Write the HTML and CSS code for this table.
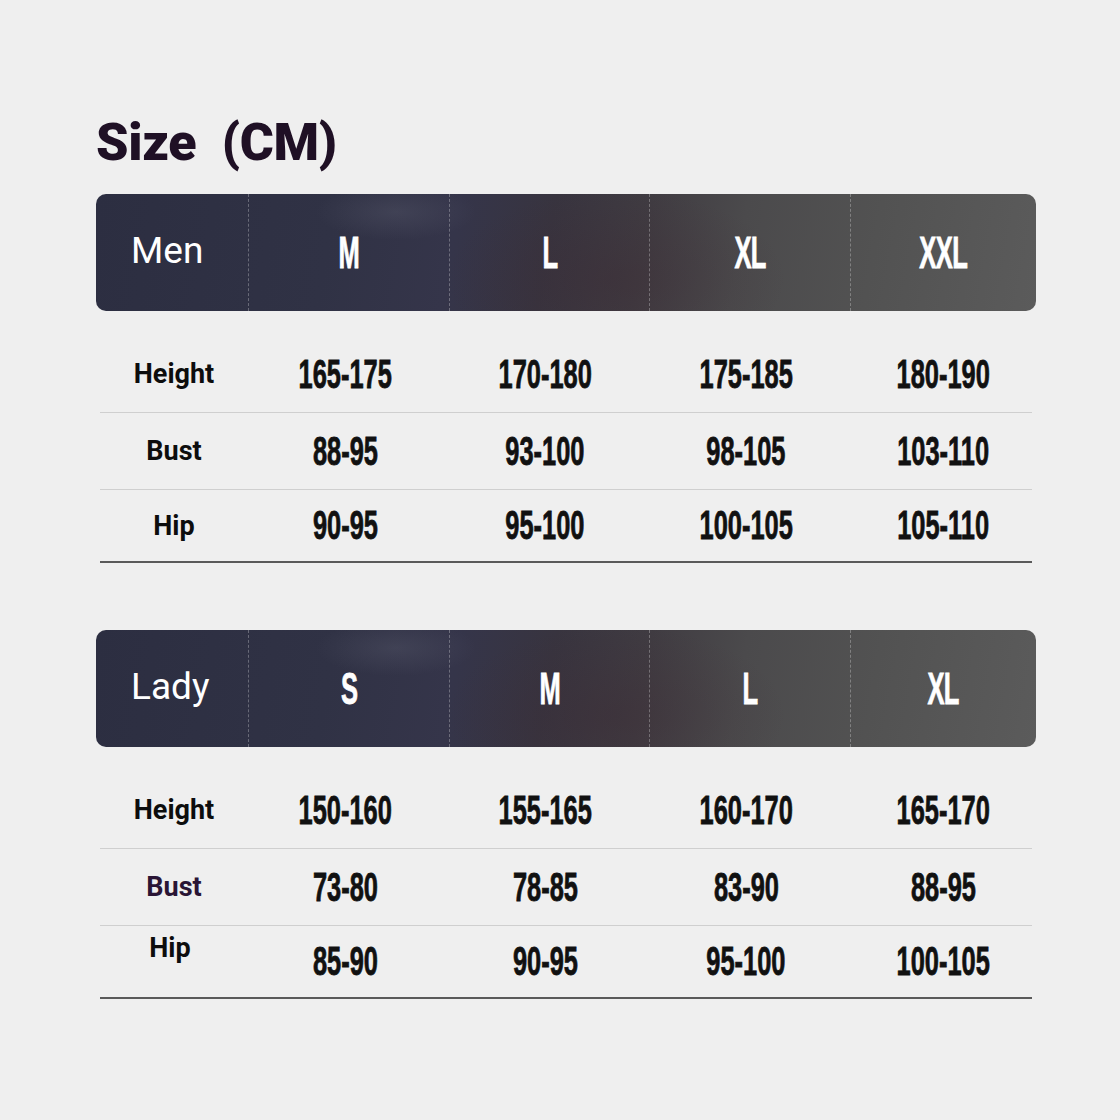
FILE: index.html
```html
<!DOCTYPE html>
<html>
<head>
<meta charset="utf-8">
<link rel="stylesheet" href="styles.css">
</head>
<body>
<div class="page">
  <h1 class="title">Size&nbsp;&nbsp;(CM)</h1>

  <section class="chart">
    <div class="head">
      <div class="hcell group">Men</div>
      <div class="hcell size"><span class="cond">M</span></div>
      <div class="hcell size"><span class="cond">L</span></div>
      <div class="hcell size"><span class="cond">XL</span></div>
      <div class="hcell size"><span class="cond">XXL</span></div>
    </div>
    <div class="rows">
      <div class="row">
        <div class="label">Height</div>
        <div class="val"><span class="cond">165-175</span></div>
        <div class="val"><span class="cond">170-180</span></div>
        <div class="val"><span class="cond">175-185</span></div>
        <div class="val"><span class="cond">180-190</span></div>
      </div>
      <div class="row">
        <div class="label">Bust</div>
        <div class="val"><span class="cond">88-95</span></div>
        <div class="val"><span class="cond">93-100</span></div>
        <div class="val"><span class="cond">98-105</span></div>
        <div class="val"><span class="cond">103-110</span></div>
      </div>
      <div class="row last">
        <div class="label">Hip</div>
        <div class="val"><span class="cond">90-95</span></div>
        <div class="val"><span class="cond">95-100</span></div>
        <div class="val"><span class="cond">100-105</span></div>
        <div class="val"><span class="cond">105-110</span></div>
      </div>
    </div>
  </section>

  <section class="chart second">
    <div class="head">
      <div class="hcell group">Lady</div>
      <div class="hcell size"><span class="cond">S</span></div>
      <div class="hcell size"><span class="cond">M</span></div>
      <div class="hcell size"><span class="cond">L</span></div>
      <div class="hcell size"><span class="cond">XL</span></div>
    </div>
    <div class="rows">
      <div class="row">
        <div class="label">Height</div>
        <div class="val"><span class="cond">150-160</span></div>
        <div class="val"><span class="cond">155-165</span></div>
        <div class="val"><span class="cond">160-170</span></div>
        <div class="val"><span class="cond">165-170</span></div>
      </div>
      <div class="row">
        <div class="label purple">Bust</div>
        <div class="val"><span class="cond">73-80</span></div>
        <div class="val"><span class="cond">78-85</span></div>
        <div class="val"><span class="cond">83-90</span></div>
        <div class="val"><span class="cond">88-95</span></div>
      </div>
      <div class="row last">
        <div class="label raised">Hip</div>
        <div class="val"><span class="cond">85-90</span></div>
        <div class="val"><span class="cond">90-95</span></div>
        <div class="val"><span class="cond">95-100</span></div>
        <div class="val"><span class="cond">100-105</span></div>
      </div>
    </div>
  </section>
</div>
</body>
</html>
```
FILE: styles.css
```css
html, body {
  margin: 0;
  padding: 0;
  background: #efefef;
}

.page {
  width: 940px;
  margin-left: 96px;
  padding-top: 116px;
  font-family: Roboto, "Liberation Sans", sans-serif;
}

.title {
  margin: 0 0 24px 0;
  font-size: 52px;
  line-height: 54px;
  font-weight: 900;
  color: #1f1025;
  letter-spacing: -0.3px;
}

.chart.second {
  margin-top: 67px;
}

.head {
  display: grid;
  grid-template-columns: 152px 201px 200px 201px 1fr;
  height: 117px;
  border-radius: 10px;
  overflow: hidden;
  background:
    radial-gradient(ellipse 80px 28px at 300px 18px, rgba(90,92,110,0.35), rgba(90,92,110,0) 100%),
    radial-gradient(ellipse 170px 90px at 520px 85px, rgba(60,40,50,0.35), rgba(60,40,50,0) 100%),
    linear-gradient(100deg, #2c2e41 0%, #303245 25%, #35354a 38%, #38343f 48%, #403c42 58%, #4b4a4c 68%, #525252 82%, #5b5b5b 100%);
}

.hcell {
  display: flex;
  align-items: center;
  justify-content: center;
  color: #ffffff;
}

.hcell.size {
  border-left: 1px dashed rgba(255, 255, 255, 0.28);
}

.hcell.group {
  justify-content: flex-start;
  padding-left: 35px;
  font-size: 37px;
  font-weight: 400;
  padding-bottom: 4px;
}

.cond {
  display: inline-block;
  font-family: "Liberation Sans", Arial, sans-serif;
  font-weight: 700;
  transform: scaleX(0.62);
  -webkit-text-stroke: 0.8px currentColor;
  white-space: nowrap;
}

.hcell.size .cond {
  font-size: 44px;
  letter-spacing: -1px;
  transform: scaleX(0.58);
}

.rows {
  margin: 0 4px;
  padding-top: 25px;
  border-bottom: 2px solid #5a5a5a;
}

.row {
  display: grid;
  grid-template-columns: 148px 194px 206px 196px 1fr;
  height: 76px;
  align-items: center;
  border-bottom: 1.5px solid #cfcfcf;
}

.row.last {
  border-bottom: none;
  height: 71px;
}

.label {
  text-align: center;
  font-size: 27px;
  font-weight: 700;
  color: #0d0d0d;
}

.label.purple {
  color: #2a1535;
}

.label.raised {
  position: relative;
  top: -14px;
  left: -4px;
}

.val {
  text-align: center;
  color: #111111;
}

.val:last-child {
  padding-left: 10px;
}

.val .cond {
  font-size: 41px;
  letter-spacing: 0;
}
```
